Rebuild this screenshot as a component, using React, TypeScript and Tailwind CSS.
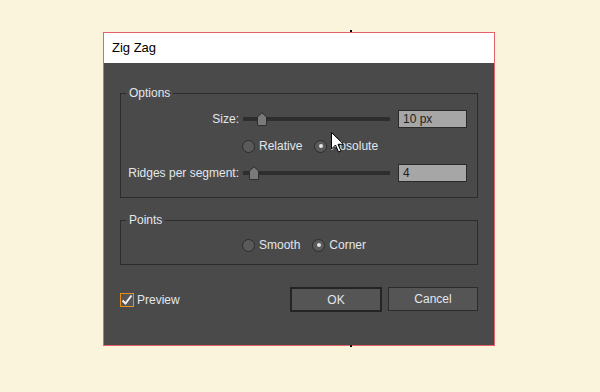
import React from "react";

const font = { fontFamily: '"Liberation Sans", Arial, sans-serif' };

const Radio = ({ label, checked }: { label: string; checked?: boolean }) => (
  <div className="flex items-center gap-[4px]">
    <div className="w-[13px] h-[13px] rounded-full border border-[#2c2c2c] bg-[#5a5a5a] flex items-center justify-center">
      {checked && <div className="w-[4px] h-[4px] rounded-full bg-[#e6e6e6]" />}
    </div>
    <span>{label}</span>
  </div>
);

const Slider = ({ pos }: { pos: number }) => (
  <div className="relative w-[147px] h-[14px] flex items-center">
    <div className="w-full h-[4px] bg-[#2e2e2e]" />
    <svg
      className="absolute top-0"
      style={{ left: pos }}
      width="10"
      height="14"
      viewBox="0 0 10 14"
    >
      <path d="M0.5 13.5 V5 L5 0.8 L9.5 5 V13.5 Z" fill="#7a7a7a" stroke="#2e2e2e" />
    </svg>
  </div>
);

const Field = ({ value }: { value: string }) => (
  <div className="w-[69px] h-[18px] border border-[#2a2a2a] bg-[#a6a6a6] text-[#1e1e1e] pl-[4px] leading-[16px]">
    {value}
  </div>
);

export default function App() {
  return (
    <div className="w-[600px] h-[392px] bg-[#faf4dc] pt-[32px] pl-[103px] relative" style={font}>
      <div className="absolute left-[350px] top-[30px] w-[2px] h-[2px] bg-black" />
      <div className="absolute left-[350px] top-[345px] w-[2px] h-[2px] bg-black" />

      <div className="w-[392px] h-[314px] border border-[#e8606a] flex flex-col text-[12px] text-[#e2e7ec]">
        <div className="h-[30px] bg-white text-black text-[13px] pl-[8px] flex items-center">Zig Zag</div>
        <div className="flex-1 bg-[#4a4a4a] px-4">
          <fieldset className="mt-[22px] border border-[#2c2c2c]">
            <legend className="ml-[5px] px-[3px] leading-[16px]">Options</legend>
            <div className="pt-[4px] pb-[11px]">
              <div className="h-[27px] flex items-center">
                <div className="w-[118px] text-right">Size:</div>
                <div className="ml-[4px]">
                  <Slider pos={14} />
                </div>
                <div className="ml-[8px]">
                  <Field value="10 px" />
                </div>
              </div>
              <div className="h-[27px] pt-[1px] flex items-center pl-[121px] gap-[12px]">
                <Radio label="Relative" />
                <Radio label="Absolute" checked />
              </div>
              <div className="h-[27px] flex items-center">
                <div className="w-[118px] text-right">Ridges per segment:</div>
                <div className="ml-[4px]">
                  <Slider pos={6} />
                </div>
                <div className="ml-[8px]">
                  <Field value="4" />
                </div>
              </div>
            </div>
          </fieldset>

          <fieldset className="mt-[14px] border border-[#2c2c2c]">
            <legend className="ml-[5px] px-[3px] leading-[16px]">Points</legend>
            <div className="pt-[7px] pb-[9px] h-[36px] flex items-center pl-[121px] gap-[12px]">
              <Radio label="Smooth" />
              <Radio label="Corner" checked />
            </div>
          </fieldset>

          <div className="mt-[22px] flex items-center">
            <div className="flex items-center gap-[3px]">
              <div className="w-[14px] h-[14px] border border-[#e8901e] bg-[#555] flex items-center justify-center">
                <svg width="12" height="12" viewBox="0 0 12 12">
                  <path d="M1.5 6.5 L4.5 9.5 L10.5 1.5" fill="none" stroke="#f0f0f0" strokeWidth="2" />
                </svg>
              </div>
              <span>Preview</span>
            </div>
            <div className="ml-auto flex gap-[6px]">
              <button className="w-[92px] h-[25px] border-2 border-[#242424] bg-[#555555] text-[#e2e7ec]">OK</button>
              <button className="w-[90px] h-[24px] border border-[#2c2c2c] bg-[#555555] text-[#e2e7ec]">Cancel</button>
            </div>
          </div>
        </div>
      </div>

      <svg className="absolute left-[331px] top-[132px]" width="14" height="22" viewBox="0 0 14 22">
        <path d="M0.5 0.5 V17 L4.5 13 L7.5 20 L10 19 L7 12.3 L12.5 12.3 Z" fill="#fff" stroke="#000" strokeWidth="1" />
      </svg>
    </div>
  );
}
